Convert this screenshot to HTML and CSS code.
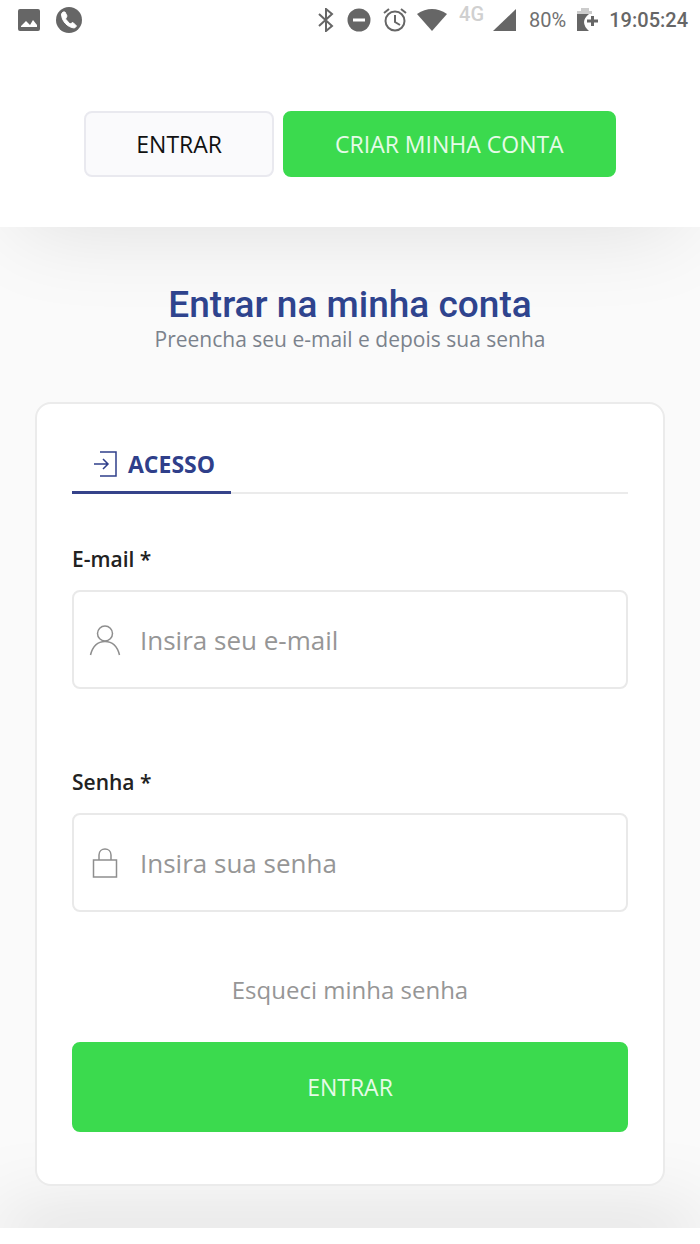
FILE: index.html
```html
<!DOCTYPE html>
<html lang="pt-BR">
<head>
<meta charset="utf-8">
<meta name="viewport" content="width=device-width, initial-scale=1">
<title>Entrar na minha conta</title>
<link rel="stylesheet" href="styles.css">
</head>
<body>
<div class="status">
  <div class="status-left">
    <svg width="22" height="22" viewBox="0 0 22 22"><path fill="#666" fill-rule="evenodd" d="M2 0h18q2 0 2 2v18q0 2-2 2H2q-2 0-2-2V2q0-2 2-2zM3 18h16v-2l-4-5-3 5-4-4-5 5z"/></svg>
    <svg width="26" height="26" viewBox="0 0 26 26"><circle cx="13" cy="13" r="13" fill="#666"/><path d="M7 5 5.500 7c0 7 6 13.500 13 14l2-2-3.500-3.500-3 1.500-4.500-5L11 9 9 5z" fill="#fff" stroke="#fff" stroke-linejoin="round"/></svg>
  </div>
  <div class="status-right">
    <svg class="bt" width="16" height="24" viewBox="0 0 16 24" fill="none" stroke="#666" stroke-width="2"><path d="m1 6 13 12-6 5V1l6 5L1 18"/></svg>
    <svg class="dnd" width="24" height="24" viewBox="0 0 24 24"><circle cx="12" cy="12" r="11.500" fill="#666"/><path d="M6 12h12" stroke="#fff" stroke-width="3"/></svg>
    <svg class="alarm" width="24" height="24" viewBox="0 0 24 24" fill="none" stroke="#666" stroke-width="2"><circle cx="12" cy="13" r="9.500"/><path d="M12 7v7l5 3M1 5l5-4M23 5l-5-4"/></svg>
    <svg class="wifi" width="30" height="24" viewBox="0 0 30 24"><path fill="#666" d="M0 6q15-10 30 0L15 23z"/></svg>
    <span class="network">4G</span>
    <svg class="signal" width="24" height="24" viewBox="0 0 24 24"><path fill="#666" d="M23 1v22H0z"/></svg>
    <span class="percent">80%</span>
    <svg class="battery" width="22" height="24" viewBox="0 0 22 24"><path fill="#ccc" d="M0 3h4V0h8v3h3v3H0z"/><path fill="#666" d="M0 6h12q-10 8 0 17H0z"/><path d="M10 13h11M15.500 8v10" stroke="#666" stroke-width="3"/></svg>
    <span class="clock">19:05:24</span>
  </div>
</div>
<header class="topbar">
  <button class="btn btn-light" type="button">ENTRAR</button>
  <button class="btn btn-green" type="button">CRIAR MINHA CONTA</button>
</header>
<main class="page">
  <h1 class="title">Entrar na minha conta</h1>
  <p class="subtitle">Preencha seu e-mail e depois sua senha</p>
  <form class="card">
    <div class="tabs">
      <button class="tab" type="button">
        <svg width="26" height="26" viewBox="0 0 26 26" fill="none" stroke="#2f3f8a" stroke-width="1.500"><path d="M6 1h16v24H6M0 13h14M9 8l5 5-5 5"/></svg>
        ACESSO
      </button>
    </div>
    <label class="label" for="email">E-mail *</label>
    <div class="field">
      <svg width="32" height="32" viewBox="0 0 32 32" fill="none" stroke="#8e8e8e" stroke-width="1.500"><circle cx="16" cy="9.500" r="7.500"/><path d="M1.500 31c2-8 7-13.500 14.500-13.500S28.500 23 30.500 31"/></svg>
      <input class="input" id="email" type="email" placeholder="Insira seu e-mail">
    </div>
    <label class="label" for="senha">Senha *</label>
    <div class="field">
      <svg width="32" height="32" viewBox="0 0 32 32" fill="none" stroke="#8e8e8e" stroke-width="1.500"><path d="M4.500 13h23v17h-23zM10 13V8c0-8 12-8 12 0v5"/></svg>
      <input class="input" id="senha" type="password" placeholder="Insira sua senha">
    </div>
    <a class="forgot" href="#">Esqueci minha senha</a>
    <button class="btn btn-green btn-wide" type="submit">ENTRAR</button>
  </form>
</main>
<footer class="bottom"></footer>
</body>
</html>
```
FILE: styles.css
```css
* { box-sizing: border-box; }
body {
  margin: 0;
  background: #fafafa;
  font-family: "Open Sans", sans-serif;
}
svg { display: block; flex: none; }
.status {
  display: flex;
  justify-content: space-between;
  height: 40px;
  padding: 0 12px 0 18px;
  background: #fff;
  font-family: Roboto, sans-serif;
  font-size: 20px;
  font-weight: 500;
  color: #666;
}
.status-left, .status-right { display: flex; align-items: center; }
.status-left { gap: 16px; }
.bt { margin-right: 13px; }
.dnd { margin-right: 12px; }
.alarm { margin-right: 10px; }
.wifi { margin-right: 12px; }
.network { margin-right: 9px; padding-bottom: 12px; color: #d0d0d0; }
.signal { margin-right: 12px; }
.percent { margin-right: 11px; font-weight: 400; color: #707070; }
.battery { margin-right: 10px; }
.topbar {
  display: flex;
  justify-content: center;
  gap: 9px;
  padding: 71px 24px 50px;
  background: #fff;
  box-shadow: 0 20px 90px -20px #0000001e;
  clip-path: inset(0 0 -160px 0);
}
.btn {
  height: 66px;
  padding: 0 50px;
  border: 2px solid #e9e9ef;
  border-radius: 8px;
  font-family: inherit;
  font-size: 23px;
  font-weight: 400;
  white-space: nowrap;
}
.btn-light { background: #fafafc; color: #111; }
.btn-green { background: #3bda4e; border-color: #3bda4e; color: #e6fbe8; }
.page {
  padding: 54px 35px 42px;
  text-align: center;
}
.title {
  margin: 0;
  font-family: Roboto, sans-serif;
  font-size: 37px;
  font-weight: 500;
  line-height: 48px;
  color: #2f448e;
}
.subtitle {
  margin: 0 0 52px;
  font-size: 21px;
  line-height: 21px;
  color: #7b828c;
}
.card {
  position: relative;
  z-index: 1;
  padding: 34px 35px 52px;
  background: #fff;
  border: 2px solid #ebebeb;
  border-radius: 16px;
  text-align: left;
}
.tabs { display: flex; border-bottom: 2px solid #ebebeb; }
.tab {
  display: flex;
  align-items: center;
  gap: 8px;
  margin-bottom: -2px;
  height: 56px;
  padding: 0 16px 2px 22px;
  border: 0;
  border-bottom: 3px solid #35438a;
  background: none;
  font-family: inherit;
  font-size: 23px;
  font-weight: 700;
  color: #2f3f8a;
}
.label {
  display: block;
  margin-top: 50px;
  font-size: 21px;
  font-weight: 600;
  line-height: 30px;
  color: #222;
}
.field {
  display: flex;
  align-items: center;
  gap: 19px;
  height: 99px;
  margin: 16px 0 62px;
  padding: 0 15px;
  border: 2px solid #e9e9e9;
  border-radius: 8px;
}
.field + .label { margin-top: 78px; }
.input {
  flex: 1;
  min-width: 0;
  height: 60px;
  padding: 0;
  border: 0;
  outline: 0;
  background: none;
  font-family: inherit;
  font-size: 26px;
  color: #222;
}
.input::placeholder { color: #969696; opacity: 1; }
.forgot {
  display: block;
  margin-bottom: 36px;
  font-size: 24px;
  line-height: 32px;
  text-align: center;
  text-decoration: none;
  color: #969696;
}
.btn-wide { display: block; width: 100%; height: 90px; }
.bottom {
  height: 17px;
  background: #fff;
  box-shadow: 0 0 80px #00000058;
}
```
